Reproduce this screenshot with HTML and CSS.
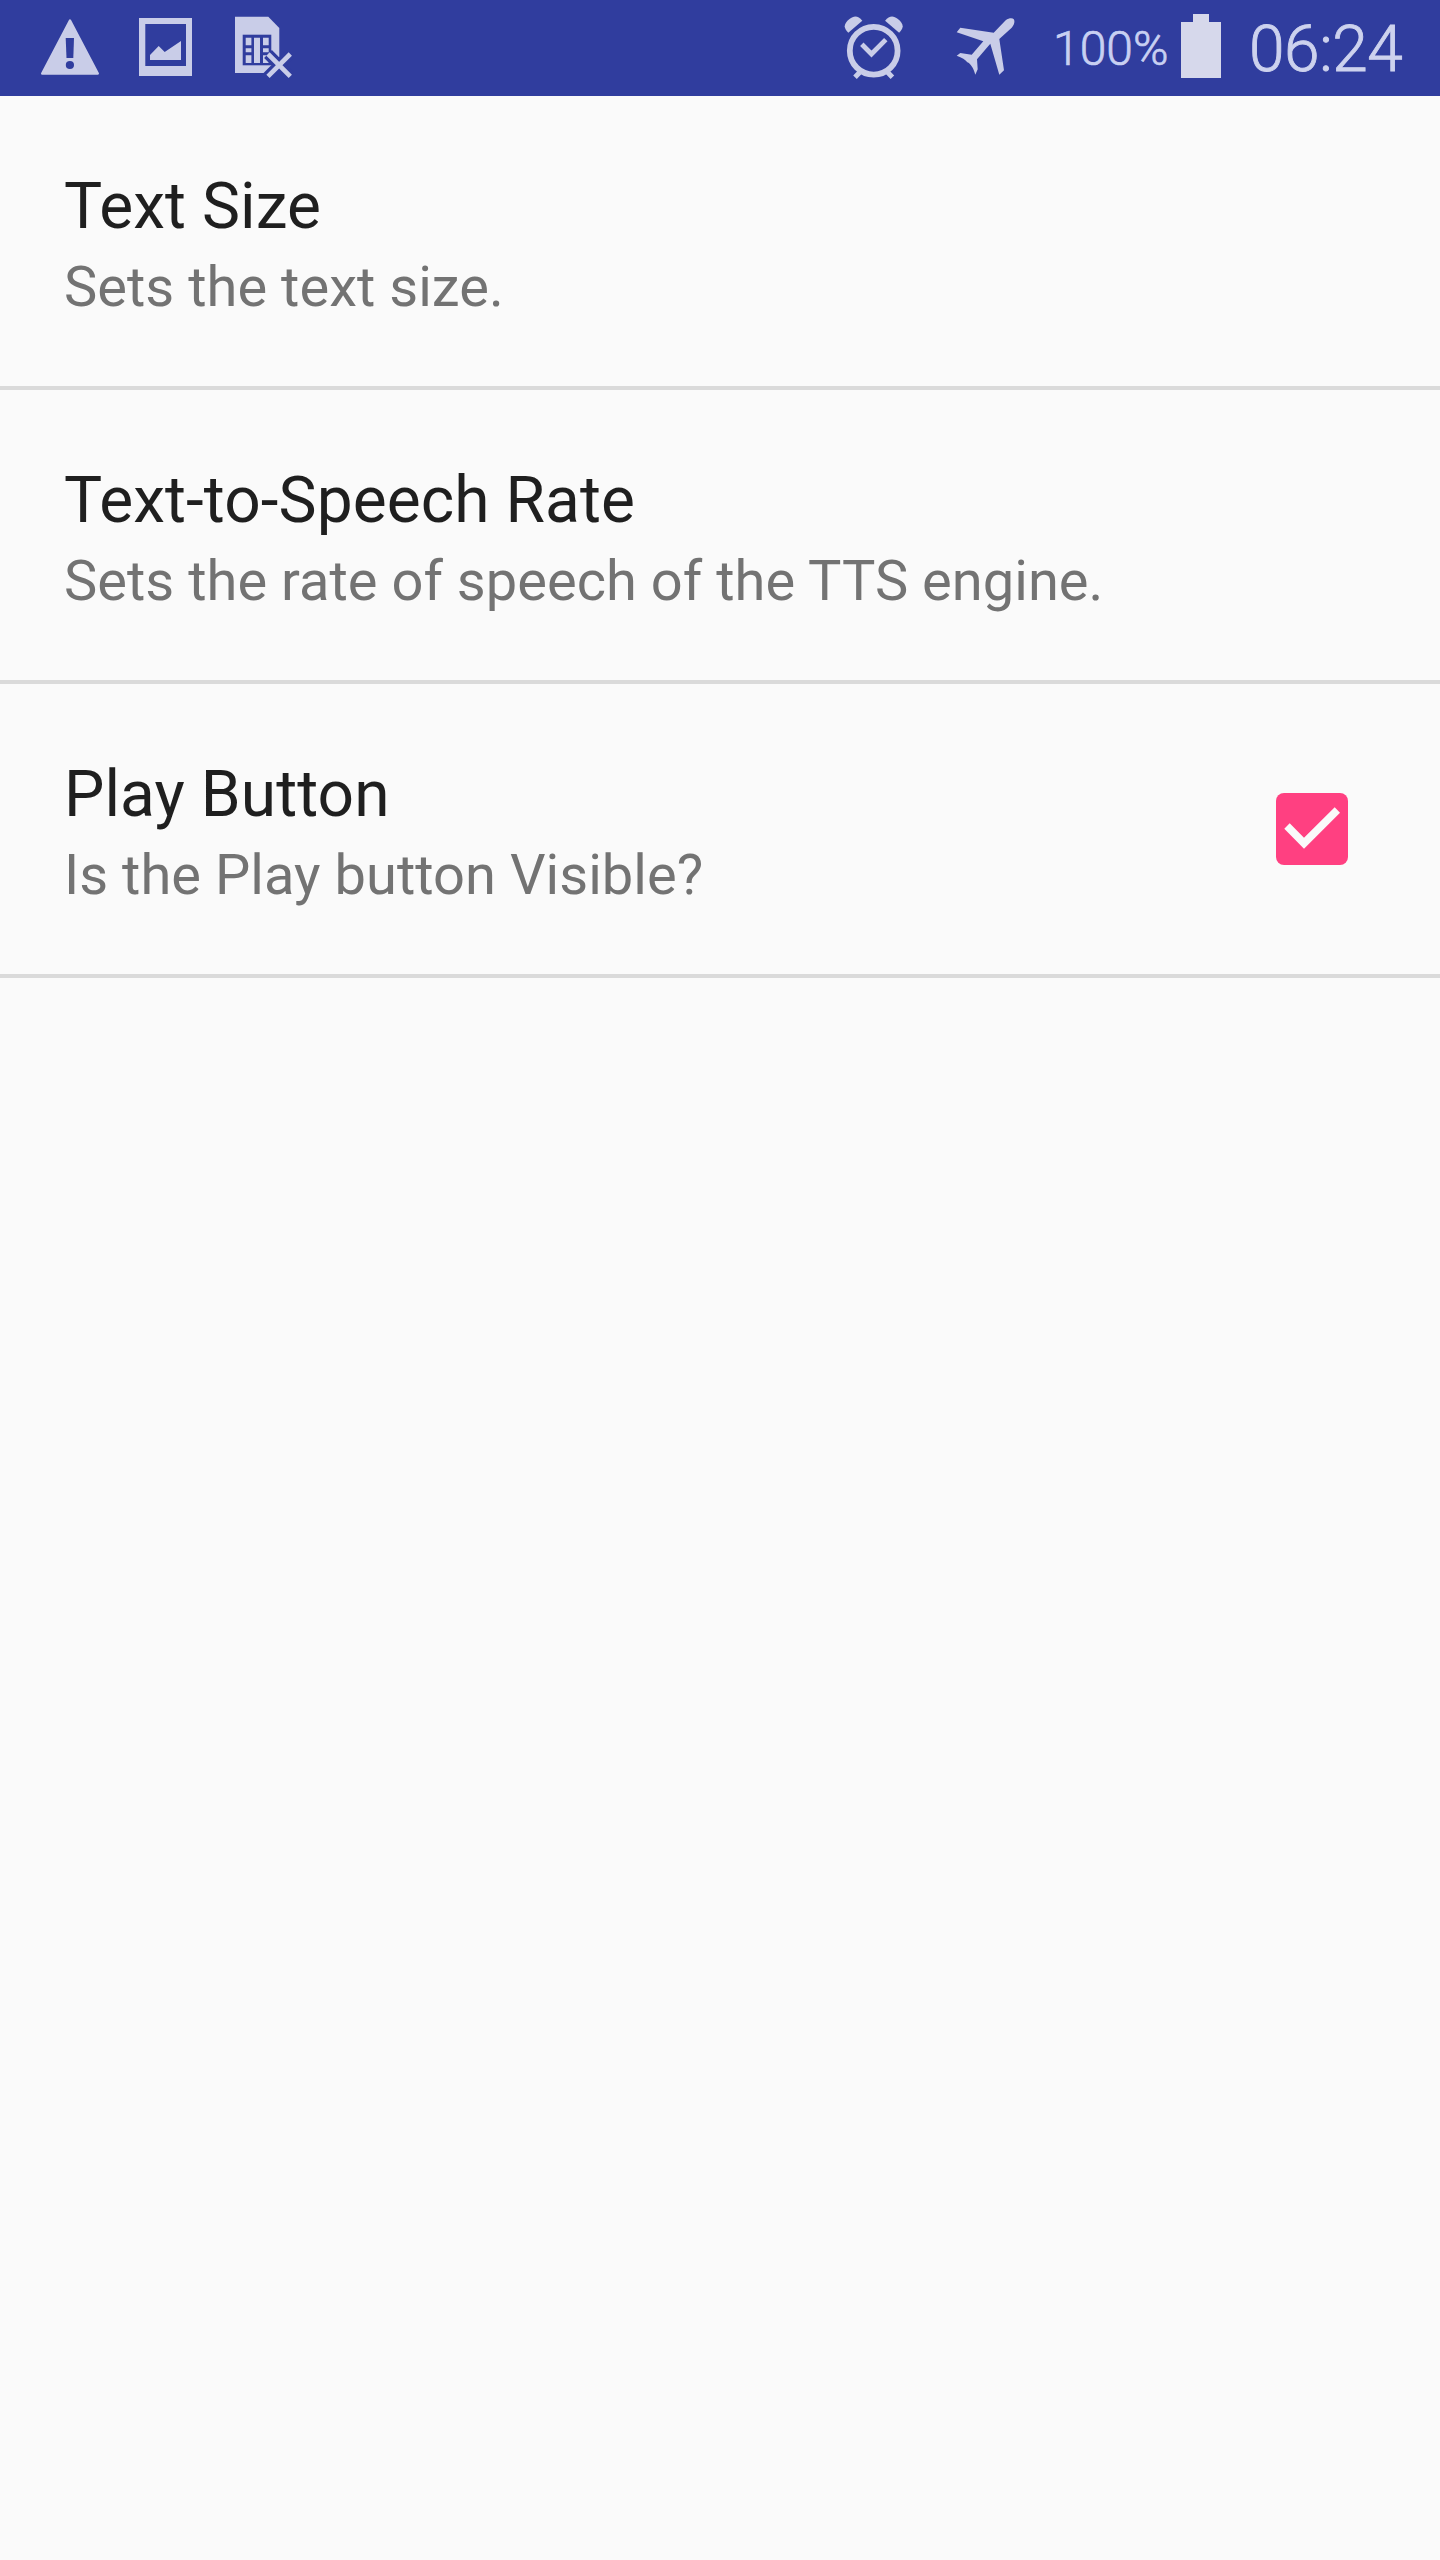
FILE: index.html
```html
<!DOCTYPE html>
<html lang="en">
<head>
    <meta charset="UTF-8">
    <meta name="viewport" content="width=device-width, initial-scale=1.0">
    <title>Settings</title>
    <link rel="stylesheet" href="styles.css">
</head>
<body>

    <header class="status-bar">
        <div class="notifications">
            <svg class="icon" width="60" height="64" viewBox="0 0 60 64">
                <path class="rounded" d="M30 4.5 L57.8 57.5 H2.2 Z"/>
                <path class="cut" d="M25.7 22 H34 L33.3 42 H26.5 Z"/>
                <circle class="cut" cx="29.9" cy="49" r="4.1"/>
            </svg>
            <svg class="icon" width="58" height="64" viewBox="0 0 58 64">
                <path fill-rule="evenodd" d="M1 2 H54 V60 H1 Z M7.3 8 V50 H48 V8 Z"/>
                <path d="M12 39 L20.7 30 L26.7 36 L43 25 V44 H12 Z"/>
            </svg>
            <svg class="icon" width="60" height="64" viewBox="0 0 60 64">
                <path d="M1 0.8 H34.3 L45.3 12 V57 H1 Z"/>
                <rect class="cut" x="8.7" y="18.7" width="28.6" height="30.6"/>
                <path d="M11.7 21.8 h5.7 v7.4 h-5.7 Z M11.7 32.3 h5.7 v4 h-5.7 Z M11.7 39.3 h5.7 v7.6 h-5.7 Z M20 21.8 h6 v25.1 h-6 Z M29 21.8 h5.7 v7.4 h-5.7 Z M29 32.3 h5.7 v4 h-5.7 Z M29 39.3 h5.7 v7.6 h-5.7 Z"/>
                <path class="cross-gap" d="M34 38 L56.3 60.3 M56.3 38 L27 67.3"/>
                <path class="cross" d="M34 38 L56.3 60.3 M56.3 38 L34 60.3"/>
            </svg>
        </div>

        <div class="system">
            <svg class="icon alarm" width="64" height="64" viewBox="0 0 64 64">
                <circle class="line" cx="31.7" cy="34.7" r="23.9" stroke-width="5.8"/>
                <path class="line" d="M19.8 28.3 L29.5 38 L43.8 23.6" stroke-width="4.8"/>
                <path class="line" d="M13 61.2 L19 55 M50.4 61.2 L44.4 55" stroke-width="5"/>
                <path d="M6.3 16.7 L20.3 4.7 C16 -0.6 12 -0.6 7.5 3 C2 7.5 0.8 11.5 6.3 16.7 Z"/>
                <path d="M57.1 16.7 L43.1 4.7 C47.4 -0.6 51.4 -0.6 55.9 3 C61.4 7.5 62.6 11.5 57.1 16.7 Z"/>
            </svg>
            <svg class="icon plane" width="60" height="64" viewBox="0 0 60 64">
                <path d="M0.7 16.3 L4.3 11.7 L37.7 16.7 L49.7 4.3 C53 1.8 56.5 1.8 57.8 3.2 C59 5 58.5 8.5 55.7 11.7 L43.3 23 L48 54.3 L43.3 58.7 L34.3 27.7 L21 43.3 L21.7 53.3 L19.3 58.7 C17.5 52 14.5 47.5 11.3 46.3 C9.5 44 6 41.5 0.7 39.7 L4.3 37 L15.7 38.7 L27.3 25.3 Z"/>
            </svg>
            <span class="battery-level">100%</span>
            <svg class="battery" width="40" height="64" viewBox="0 0 40 64">
                <path d="M12 0 H28 V8 H40 V64 H0 V8 H12 Z"/>
            </svg>
            <span class="clock">06:24</span>
        </div>
    </header>

    <main class="preferences">
        <div class="preference">
            <div class="texts">
                <h2 class="title">Text Size</h2>
                <p class="summary">Sets the text size.</p>
            </div>
        </div>

        <div class="preference">
            <div class="texts">
                <h2 class="title">Text-to-Speech Rate</h2>
                <p class="summary">Sets the rate of speech of the TTS engine.</p>
            </div>
        </div>

        <div class="preference">
            <div class="texts">
                <h2 class="title">Play Button</h2>
                <p class="summary">Is the Play button Visible?</p>
            </div>
            <svg class="checkbox" width="72" height="72" viewBox="0 0 72 72">
                <path d="M8.3 35.7 L13.7 30.3 L28 44.7 L58.7 14.3 L64 19.7 L28 55.7 Z"/>
            </svg>
        </div>
    </main>

</body>
</html>
```

FILE: styles.css
```css
* {
    margin: 0;
    padding: 0;
    box-sizing: border-box;
}

body {
    background-color: #fafafa;
    min-height: 100vh;
    font-family: Roboto, sans-serif;
}

/* Status bar */
.status-bar {
    display: flex;
    justify-content: space-between;
    height: 96px;
    padding: 0 36px 0 40px;
    background-color: #303d9e;
    color: #c8d0f2;
}

.notifications {
    display: flex;
    align-items: center;
    gap: 38px;
}

.system {
    display: flex;
    align-items: center;
}

.icon {
    fill: #c9cde8;
}

.icon .rounded {
    stroke: #c9cde8;
    stroke-width: 2.4;
    stroke-linejoin: round;
}

.icon .cut {
    fill: #303d9e;
}

.icon .line {
    fill: none;
    stroke: #c9cde8;
}

.icon .cross {
    stroke: #c9cde8;
    stroke-width: 4.6;
}

.icon .cross-gap {
    stroke: #303d9e;
    stroke-width: 11;
}

.alarm {
    margin-right: 50px;
}

.plane {
    margin-right: 37px;
}

.battery-level {
    width: 116px;
    font-size: 48px;
    font-weight: 300;
    line-height: 96px;
    padding-top: 1px;
    -webkit-text-stroke: 0.7px #c8d0f2;
}

.battery {
    fill: #d6d8eb;
    margin: -4px 28px 0 12px;
}

.clock {
    width: 155px;
    font-size: 64px;
    font-weight: 300;
    line-height: 96px;
    padding-top: 4px;
    letter-spacing: -0.4px;
    color: #cdd2ee;
    -webkit-text-stroke: 0.9px #cdd2ee;
}

/* Preference list */
.preference {
    display: flex;
    align-items: center;
    justify-content: space-between;
    height: 294px;
    padding: 0 92px 0 64px;
    border-bottom: 4px solid #dadada;
}

.texts {
    height: 146px;
}

.title {
    font-size: 64px;
    font-weight: 400;
    line-height: 78px;
    letter-spacing: 0.08px;
    color: #1f1f1f;
}

.summary {
    font-size: 56px;
    line-height: 82px;
    letter-spacing: 0.03px;
    color: #737373;
}

.checkbox {
    background-color: #ff4081;
    border-radius: 8px;
    fill: #fafafa;
}
```
